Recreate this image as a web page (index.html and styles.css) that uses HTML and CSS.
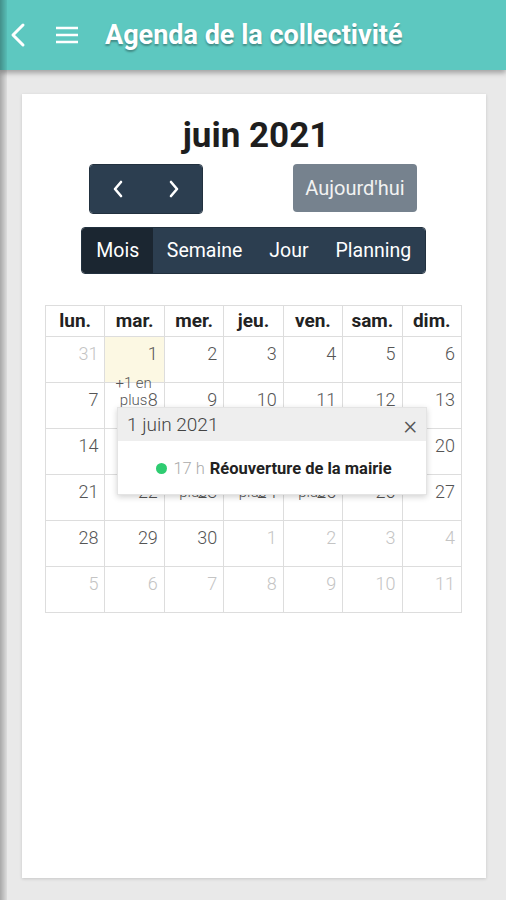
FILE: index.html
```html
<!DOCTYPE html>
<html lang="fr">
<head>
    <meta charset="utf-8">
    <meta name="viewport" content="width=device-width, initial-scale=1.0">
    <link rel="stylesheet" href="styles.css">
</head>
<body>
    <header class="app-bar">
        <span class="bar-icon back">
            <svg width="20" height="26" viewBox="0 0 20 26"><polyline points="15,3 5,13 15,23" fill="none" stroke="#fff" stroke-width="3" stroke-linecap="round" stroke-linejoin="round"/></svg>
        </span>
        <span class="bar-icon menu">
            <svg width="24" height="20" viewBox="0 0 24 20"><path d="M1 3h22M1 10h22M1 17h22" stroke="#fff" stroke-width="2.6"/></svg>
        </span>
        <h1 class="bar-title">Agenda de la collectivité</h1>
    </header>

    <main class="page">
        <section class="card">
            <h2 class="cal-title">juin 2021</h2>

            <div class="toolbar">
                <div class="btn-group">
                    <button class="btn nav">
                        <svg width="12" height="18" viewBox="0 0 12 18"><polyline points="9,2 3,9 9,16" fill="none" stroke="#fff" stroke-width="2.6" stroke-linecap="round" stroke-linejoin="round"/></svg>
                    </button>
                    <button class="btn nav">
                        <svg width="12" height="18" viewBox="0 0 12 18"><polyline points="3,2 9,9 3,16" fill="none" stroke="#fff" stroke-width="2.6" stroke-linecap="round" stroke-linejoin="round"/></svg>
                    </button>
                </div>
                <button class="btn today">Aujourd'hui</button>
            </div>

            <div class="btn-group views">
                <button class="btn view active">Mois</button>
                <button class="btn view">Semaine</button>
                <button class="btn view">Jour</button>
                <button class="btn view">Planning</button>
            </div>

            <div class="month">
                <div class="month-grid">
                    <div class="dow">lun.</div>
                    <div class="dow">mar.</div>
                    <div class="dow">mer.</div>
                    <div class="dow">jeu.</div>
                    <div class="dow">ven.</div>
                    <div class="dow">sam.</div>
                    <div class="dow">dim.</div>

                    <!-- week 1 -->
                    <div class="day other"><span class="num">31</span></div>
                    <div class="day today-cell"><span class="num">1</span><a class="more">+1 en plus</a></div>
                    <div class="day"><span class="num">2</span></div>
                    <div class="day"><span class="num">3</span></div>
                    <div class="day"><span class="num">4</span></div>
                    <div class="day"><span class="num">5</span></div>
                    <div class="day"><span class="num">6</span></div>

                    <!-- week 2 -->
                    <div class="day"><span class="num">7</span></div>
                    <div class="day"><span class="num">8</span></div>
                    <div class="day"><span class="num">9</span></div>
                    <div class="day"><span class="num">10</span></div>
                    <div class="day"><span class="num">11</span></div>
                    <div class="day"><span class="num">12</span></div>
                    <div class="day"><span class="num">13</span></div>

                    <!-- week 3 -->
                    <div class="day"><span class="num">14</span></div>
                    <div class="day"><span class="num">15</span></div>
                    <div class="day"><span class="num">16</span><a class="more">+1 en plus</a></div>
                    <div class="day"><span class="num">17</span><a class="more">+1 en plus</a></div>
                    <div class="day"><span class="num">18</span><a class="more">+1 en plus</a></div>
                    <div class="day"><span class="num">19</span></div>
                    <div class="day"><span class="num">20</span></div>

                    <!-- week 4 -->
                    <div class="day"><span class="num">21</span></div>
                    <div class="day"><span class="num">22</span></div>
                    <div class="day"><span class="num">23</span></div>
                    <div class="day"><span class="num">24</span></div>
                    <div class="day"><span class="num">25</span></div>
                    <div class="day"><span class="num">26</span></div>
                    <div class="day"><span class="num">27</span></div>

                    <!-- week 5 -->
                    <div class="day"><span class="num">28</span></div>
                    <div class="day"><span class="num">29</span></div>
                    <div class="day"><span class="num">30</span></div>
                    <div class="day other"><span class="num">1</span></div>
                    <div class="day other"><span class="num">2</span></div>
                    <div class="day other"><span class="num">3</span></div>
                    <div class="day other"><span class="num">4</span></div>

                    <!-- week 6 -->
                    <div class="day other"><span class="num">5</span></div>
                    <div class="day other"><span class="num">6</span></div>
                    <div class="day other"><span class="num">7</span></div>
                    <div class="day other"><span class="num">8</span></div>
                    <div class="day other"><span class="num">9</span></div>
                    <div class="day other"><span class="num">10</span></div>
                    <div class="day other"><span class="num">11</span></div>
                </div>

                <!-- popover opened on "+1 en plus" -->
                <div class="popover">
                    <div class="popover-head">
                        <span>1 juin 2021</span>
                        <span class="close">&times;</span>
                    </div>
                    <div class="popover-body">
                        <span class="dot"></span>
                        <span class="time">17 h</span>
                        <span class="event-title">Réouverture de la mairie</span>
                    </div>
                </div>
            </div>
        </section>
    </main>
</body>
</html>
```

FILE: styles.css
```css
* {
    margin: 0;
    padding: 0;
    box-sizing: border-box;
}

html, body {
    width: 100%;
    height: 100%;
    overflow: hidden;
}

body {
    background: #e9e9e9;
    font-family: Roboto, "Noto Sans", sans-serif;
    color: #222;
}

/* drawer edge on the left */
body::before {
    content: "";
    position: fixed;
    top: 0;
    left: 0;
    bottom: 0;
    width: 7px;
    background: linear-gradient(to right, rgba(0,0,0,0.28), rgba(0,0,0,0.05));
    z-index: 10;
}

.app-bar {
    height: 70px;
    background: #5dc8c0;
    display: flex;
    align-items: center;
    box-shadow: 0 3px 5px rgba(0,0,0,0.3);
    position: relative;
    z-index: 2;
}

.bar-icon {
    display: flex;
    align-items: center;
}

.bar-icon.back {
    margin-left: 8px;
}

.bar-icon.menu {
    margin-left: 27px;
}

.bar-title {
    margin-left: 26px;
    color: #fff;
    font-size: 27px;
    font-weight: 700;
    text-shadow: 0 2px 2px rgba(0,0,0,0.3);
}

.page {
    padding: 24px 20px 22px 22px;
}

.card {
    height: 784px;
    background: #fff;
    box-shadow: 0 1px 3px rgba(0,0,0,0.15);
    padding-top: 22px;
    display: flex;
    flex-direction: column;
    align-items: center;
}

.cal-title {
    font-size: 35px;
    font-weight: 700;
    line-height: 40px;
    color: #1e1e1e;
    margin-left: 4px;
}

.toolbar {
    width: 328px;
    margin-top: 8px;
    margin-right: 2px;
    display: flex;
    justify-content: space-between;
}

.btn {
    border: none;
    font-family: inherit;
    font-size: 19.5px;
    color: #fff;
    background: #2c3e50;
    height: 48px;
    display: flex;
    align-items: center;
    justify-content: center;
}

.btn-group {
    display: flex;
    border-radius: 4px;
    overflow: hidden;
    border: 1px solid #22313f;
}

.btn.nav {
    width: 56px;
}

.btn.today {
    width: 124px;
    border-radius: 4px;
    background: #76828e;
    color: #f2f2f2;
    font-size: 20px;
}

.views {
    margin-top: 13px;
    margin-right: 1px;
    height: 47px;
}

.btn.view {
    height: 45px;
    padding: 0 13.5px;
}

.btn.view.active {
    background: #1b2631;
    width: 71px;
}

.month {
    margin-top: 31px;
    margin-right: 1px;
    width: 417px;
    position: relative;
}

.month-grid {
    display: grid;
    grid-template-columns: repeat(7, 1fr);
    grid-template-rows: 31px repeat(6, 46px);
    border-top: 1px solid #ddd;
    border-left: 1px solid #ddd;
}

.dow, .day {
    border-right: 1px solid #ddd;
    border-bottom: 1px solid #ddd;
}

.dow {
    font-size: 19px;
    font-weight: 700;
    text-align: center;
    line-height: 30px;
    color: #222;
}

.day {
    display: flex;
    flex-direction: column;
    align-items: flex-end;
    min-height: 0;
}

.num {
    font-size: 18px;
    font-weight: 300;
    color: #555;
    line-height: 22px;
    padding: 6px 6px 0 0;
}

.day.other .num {
    color: #c4c4c4;
}

.today-cell {
    background: #fcf8e3;
}

.more {
    display: block;
    width: 100%;
    margin-top: 10px;
    font-size: 15px;
    font-weight: 300;
    line-height: 17px;
    color: #555;
    text-align: center;
    padding: 0 2px 0 0;
}

.popover {
    position: absolute;
    left: 72px;
    top: 102px;
    width: 310px;
    height: 88px;
    background: #fff;
    border: 1px solid #e4e4e4;
    box-shadow: 0 2px 6px rgba(0,0,0,0.18);
    z-index: 3;
}

.popover-head {
    height: 33px;
    background: #eee;
    display: flex;
    align-items: center;
    justify-content: space-between;
    padding: 0 9px 0 9px;
    font-size: 19px;
    font-weight: 300;
    color: #444;
}

.close {
    font-size: 26px;
    font-weight: 300;
    color: #555;
    line-height: 1;
}

.popover-body {
    height: 54px;
    display: flex;
    align-items: center;
    justify-content: center;
    font-size: 16.5px;
    gap: 5px;
    padding-left: 4px;
}

.dot {
    width: 11px;
    height: 11px;
    border-radius: 50%;
    background: #2ecc71;
    margin-right: 1px;
}

.time {
    color: #aaa;
    font-weight: 300;
}

.event-title {
    font-weight: 700;
    color: #222;
}
```
